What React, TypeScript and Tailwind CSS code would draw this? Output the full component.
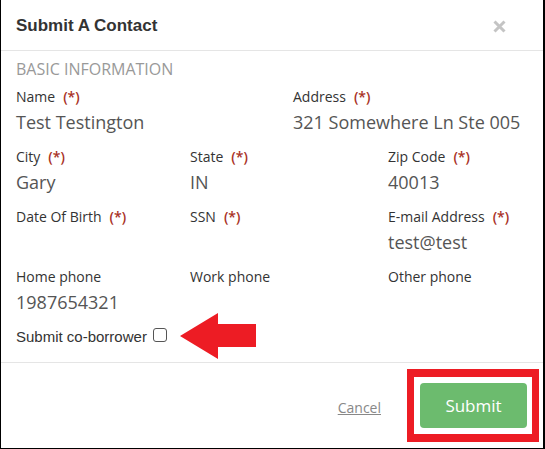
import React from "react";

type Field = {
  label: string;
  value?: string;
  required?: boolean;
  width: string;
};

const rows: Field[][] = [
  [
    { label: "Name", value: "Test Testington", required: true, width: "w-[277px]" },
    { label: "Address", value: "321 Somewhere Ln Ste 005", required: true, width: "flex-1" },
  ],
  [
    { label: "City", value: "Gary", required: true, width: "w-[174px]" },
    { label: "State", value: "IN", required: true, width: "w-[198px]" },
    { label: "Zip Code", value: "40013", required: true, width: "flex-1" },
  ],
  [
    { label: "Date Of Birth", required: true, width: "w-[174px]" },
    { label: "SSN", required: true, width: "w-[198px]" },
    { label: "E-mail Address", value: "test@test", required: true, width: "flex-1" },
  ],
  [
    { label: "Home phone", value: "1987654321", width: "w-[174px]" },
    { label: "Work phone", width: "w-[198px]" },
    { label: "Other phone", width: "flex-1" },
  ],
];

function FieldBlock({ field }: { field: Field }) {
  return (
    <div className={`${field.width} flex flex-col`}>
      <div className="h-[20px] text-[14px] leading-[20px] text-[#333] whitespace-nowrap">
        {field.label}
        {field.required && (
          <span className="ml-[8px] font-semibold text-[#a93226]">(*)</span>
        )}
      </div>
      <div className="mt-[2px] h-[26px] text-[18px] leading-[26px] text-[#555] whitespace-nowrap">
        {field.value ?? ""}
      </div>
    </div>
  );
}

export default function App() {
  return (
    <div className="w-[545px] h-[449px] bg-white border-l border-r-2 border-b border-black flex flex-col font-['Open_Sans',sans-serif]">
      <div className="h-[51px] shrink-0 flex items-center justify-between pl-[15px] pr-[37px] border-b border-[#e5e5e5]">
        <h1 className="text-[17px] font-bold text-[#333] font-['Liberation_Sans',Arial,sans-serif] mt-[1px]">
          Submit A Contact
        </h1>
        <svg width="13" height="13" viewBox="0 0 13 13" className="mt-[2px]">
          <path d="M1.5 1.5 L11.5 11.5 M11.5 1.5 L1.5 11.5" stroke="#c4c4c4" strokeWidth="3" />
        </svg>
      </div>

      <div className="px-[15px] pt-[7px] pb-[15px] border-b border-[#e5e5e5]">
        <div className="h-[22px] text-[16px] leading-[22px] text-[#999] uppercase mb-[7px]">
          Basic Information
        </div>
        {rows.map((row, i) => (
          <div key={i} className="flex mb-[12px]">
            {row.map((f) => (
              <FieldBlock key={f.label} field={f} />
            ))}
          </div>
        ))}
        <div className="flex items-start h-[20px] font-['Liberation_Sans',Arial,sans-serif] text-[15px] leading-[20px] text-[#333]">
          <span>Submit co-borrower</span>
          <span className="mt-[1px] ml-[6px] w-[14px] h-[14px] rounded-[3px] border border-[#555] bg-white" />
          <svg width="76" height="46" viewBox="0 0 76 46" className="-mt-[14px] ml-[13px]">
            <polygon points="0,23 38,0 38,11 76,11 76,34 38,34 38,46" fill="#ed1c24" />
          </svg>
        </div>
      </div>

      <div className="flex-1 flex items-start justify-end pt-[6px] pr-[4px]">
        <a className="mt-[29px] mr-[26px] text-[14px] text-[#888] underline leading-[20px] cursor-pointer">
          Cancel
        </a>
        <div className="border-x-[7px] border-y-[8px] border-[#ed1c24] pl-[6px] pr-[5px] py-[6px]">
          <button className="w-[107px] h-[45px] rounded-[4px] bg-[#6cbb6e] text-white text-[17px]">
            Submit
          </button>
        </div>
      </div>
    </div>
  );
}
